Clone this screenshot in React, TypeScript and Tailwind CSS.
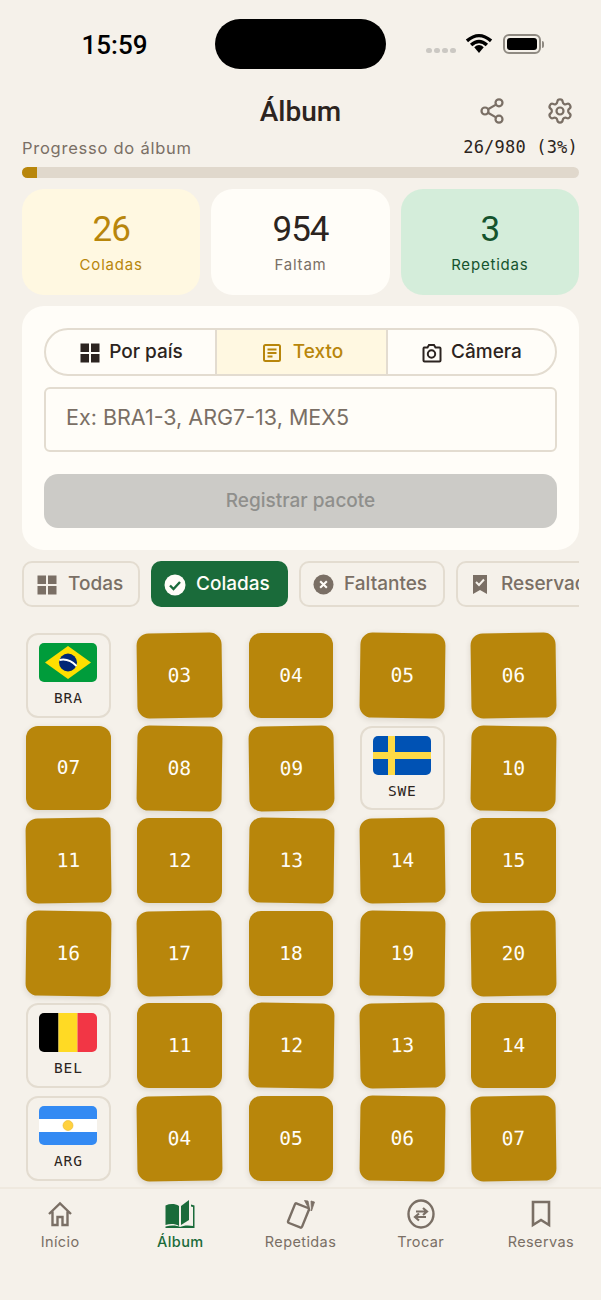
import { LucideIcon, Settings, Share2 } from "lucide-react";

type Cell = { flag?: "BRA" | "SWE" | "BEL" | "ARG"; n?: string; r?: number };

const CELLS: Cell[] = [
  { flag: "BRA" },
  { n: "03", r: -0.8 },
  { n: "04", r: 0 },
  { n: "05", r: 0.8 },
  { n: "06", r: -0.8 },
  { n: "07", r: 0 },
  { n: "08", r: 0.8 },
  { n: "09", r: -0.8 },
  { flag: "SWE" },
  { n: "10", r: 0.8 },
  { n: "11", r: -0.8 },
  { n: "12", r: 0 },
  { n: "13", r: 0.8 },
  { n: "14", r: -0.8 },
  { n: "15", r: 0 },
  { n: "16", r: 0.8 },
  { n: "17", r: -0.8 },
  { n: "18", r: 0 },
  { n: "19", r: 0.8 },
  { n: "20", r: -0.8 },
  { flag: "BEL" },
  { n: "11", r: 0 },
  { n: "12", r: 0.8 },
  { n: "13", r: -0.8 },
  { n: "14", r: 0 },
  { flag: "ARG" },
  { n: "04", r: -0.8 },
  { n: "05", r: 0 },
  { n: "06", r: 0.8 },
  { n: "07", r: -0.8 },
];

function Flag({ code }: { code: NonNullable<Cell["flag"]> }) {
  return (
    <svg width="58" height="39" viewBox="0 0 58 39" className="rounded-[5px]">
      {code === "BRA" && (
        <>
          <rect width="58" height="39" fill="#009C3B" />
          <polygon points="29,3 52,19.5 29,36 6,19.5" fill="#FFDF00" />
          <circle cx="29" cy="19.5" r="9" fill="#002776" />
          <path d="M20.5 17 Q30 15 37.5 23" stroke="#fff" strokeWidth="2" fill="none" />
        </>
      )}
      {code === "SWE" && (
        <>
          <rect width="58" height="39" fill="#0052B4" />
          <rect x="15" width="7" height="39" fill="#FFDA44" />
          <rect y="16" width="58" height="7" fill="#FFDA44" />
        </>
      )}
      {code === "BEL" && (
        <>
          <rect width="19.5" height="39" fill="#000" />
          <rect x="19.5" width="19" height="39" fill="#FFDA24" />
          <rect x="38.5" width="19.5" height="39" fill="#F23645" />
        </>
      )}
      {code === "ARG" && (
        <>
          <rect width="58" height="39" fill="#338AF3" />
          <rect y="13" width="58" height="13" fill="#fff" />
          <circle cx="29" cy="19.5" r="5" fill="#FFD13F" stroke="#E8B830" strokeWidth="0.6" />
        </>
      )}
    </svg>
  );
}

function GridIcon({ color, size = 20 }: { color: string; size?: number }) {
  return (
    <svg width={size} height={size} viewBox="0 0 20 20" fill={color}>
      <rect x="0.5" y="0.5" width="8.5" height="8.5" />
      <rect x="11" y="0.5" width="8.5" height="8.5" />
      <rect x="0.5" y="11" width="8.5" height="8.5" />
      <rect x="11" y="11" width="8.5" height="8.5" />
    </svg>
  );
}

function IconBtn({ Icon }: { Icon: LucideIcon }) {
  return <Icon size={28} strokeWidth={1.9} color="#7A6F65" />;
}

function Stat({ value, label, bg, color, labelColor }: { value: string; label: string; bg: string; color: string; labelColor: string }) {
  return (
    <div className={`flex-1 h-[106px] rounded-[22px] flex flex-col items-center ${bg}`}>
      <div className={`mt-[21px] h-[40px] leading-[40px] text-[35px] tracking-[-1px] font-['Roboto',sans-serif] ${color}`}>{value}</div>
      <div className={`mt-[4px] text-[15px] tracking-[0.8px] ${labelColor}`}>{label}</div>
    </div>
  );
}

function Sticker({ cell }: { cell: Cell }) {
  if (cell.flag) {
    return (
      <div className="aspect-square rounded-[12px] border-2 border-[#E3DCD0] bg-[#F5F1EA] flex flex-col items-center pt-[8px]">
        <Flag code={cell.flag} />
        <div className="mt-[7px] text-[14.5px] leading-[18px] tracking-[0.8px] text-[#2C2420] font-['DejaVu_Sans_Mono',monospace]">{cell.flag}</div>
      </div>
    );
  }
  return (
    <div
      className="aspect-square rounded-[12px] bg-[#B8860B] shadow-[0_2px_6px_rgba(60,40,10,0.14)] flex items-center justify-center text-[19.5px] text-[#FFFDF8] font-['DejaVu_Sans_Mono',monospace]"
      style={{ transform: `rotate(${cell.r}deg)` }}
    >
      {cell.n}
    </div>
  );
}

const NAV_COLOR = "#7A6F65";

function NavItem({ label, active, children }: { label: string; active?: boolean; children: React.ReactNode }) {
  return (
    <div className="flex-1 flex flex-col items-center">
      <div className="h-[32px] flex items-center justify-center">{children}</div>
      <div className={`mt-[3px] text-[14.5px] leading-[18px] tracking-[0.4px] ${active ? "text-[#1A6B3A] font-medium" : "text-[#7A6F65]"}`}>{label}</div>
    </div>
  );
}

export default function App() {
  return (
    <div className="w-[601px] h-[1300px] overflow-hidden bg-[#F5F1EA] flex flex-col font-['Inter',sans-serif] text-[#2C2420]">
      {/* Status bar */}
      <div className="h-[88px] shrink-0 flex pt-[19px]">
        <div className="w-[215px] h-[50px] flex items-center justify-center pl-[14px] pt-[2px] text-[26px] font-medium text-black font-['Roboto',sans-serif]">15:59</div>
        <div className="w-[171px] h-[50px] rounded-[25px] bg-black" />
        <div className="flex-1 h-[50px] flex items-center pl-[40px]">
          <div className="flex gap-[2.5px] mt-[13px]">
            {[0, 1, 2, 3].map((i) => (
              <div key={i} className="w-[5.5px] h-[5.5px] rounded-full bg-[#CBC8C3]" />
            ))}
          </div>
          <svg width="28" height="21" viewBox="0 0 26 20" className="ml-[9px] mt-[-1px]">
            <path d="M1.5 7.5 Q13 -2.5 24.5 7.5 M5.5 11.5 Q13 4.5 20.5 11.5" stroke="#000" strokeWidth="3.2" fill="none" />
            <path d="M8.5 13.5 Q13 9.5 17.5 13.5 L13 19 Z" fill="#000" />
          </svg>
          <div className="ml-[10px] w-[38px] h-[20px] rounded-[6px] border-2 border-[#8F8A82] p-[2px] mt-[-1px] flex">
            <div className="flex-1 rounded-[3px] bg-black" />
          </div>
          <div className="w-[2px] h-[7px] bg-[#8F8A82] rounded-r-sm ml-[1px]" />
        </div>
      </div>

      {/* Header */}
      <div className="h-[47px] shrink-0 relative flex items-center justify-center">
        <div className="text-[28px] font-medium font-['Roboto',sans-serif]">Álbum</div>
        <div className="absolute right-[27px] top-[9px] flex gap-[40px]">
          <IconBtn Icon={Share2} />
          <IconBtn Icon={Settings} />
        </div>
      </div>

      {/* Progress */}
      <div className="px-[22px] shrink-0">
        <div className="h-[26px] flex items-center justify-between">
          <span className="text-[16.5px] tracking-[0.75px] text-[#7A6F65]">Progresso do álbum</span>
          <span className="text-[17px] tracking-[0.2px] mr-[1px] text-[#2C2420] font-['DejaVu_Sans_Mono',monospace]">26/980 (3%)</span>
        </div>
        <div className="mt-[6px] h-[11px] rounded-full bg-[#E0D8CC] overflow-hidden">
          <div className="h-full w-[15px] bg-[#B8860B]" />
        </div>

        <div className="mt-[11px] flex gap-[11px]">
          <Stat value="26" label="Coladas" bg="bg-[#FFF8E1]" color="text-[#B8860B]" labelColor="text-[#B8860B]" />
          <Stat value="954" label="Faltam" bg="bg-[#FFFDF8]" color="text-[#2C2420]" labelColor="text-[#7A6F65]" />
          <Stat value="3" label="Repetidas" bg="bg-[#D4EDDA]" color="text-[#14532D]" labelColor="text-[#14532D]" />
        </div>

        {/* Register card */}
        <div className="mt-[11px] h-[244px] rounded-[22px] bg-[#FFFDF8] p-[22px]">
          <div className="h-[48px] rounded-[24px] border-2 border-[#E3DCD0] flex overflow-hidden text-[19px] font-medium">
            <div className="flex-1 flex items-center justify-center gap-[9px] pt-[1px] pl-[2px]">
              <GridIcon color="#2C2420" />
              Por país
            </div>
            <div className="flex-1 flex items-center justify-center gap-[11px] pt-[1px] pl-[2px] bg-[#FFF8E1] border-x-2 border-[#E3DCD0] text-[#B8860B]">
              <svg width="20" height="20" viewBox="0 0 20 20" fill="none" stroke="#B8860B" strokeWidth="2">
                <rect x="2" y="2" width="16" height="16" rx="1.5" />
                <path d="M5.5 6.5h9M5.5 10h9M5.5 13.5h5" />
              </svg>
              Texto
            </div>
            <div className="flex-1 flex items-center justify-center gap-[9px] pt-[1px]">
              <svg width="21" height="20" viewBox="0 0 21 20" fill="none" stroke="#2C2420" strokeWidth="2">
                <path d="M2.5 4.5h4l1.5-2.5h5l1.5 2.5h4a1 1 0 0 1 1 1v12a1 1 0 0 1-1 1h-15a1 1 0 0 1-1-1v-12a1 1 0 0 1 1-1z" />
                <circle cx="10.5" cy="11" r="3.7" />
              </svg>
              Câmera
            </div>
          </div>

          <div className="mt-[11px] h-[65px] rounded-[6px] border-2 border-[#E3DCD0] flex items-center pl-[20px] pb-[4px] text-[21.5px] text-[#7A6F65]">
            Ex: BRA1-3, ARG7-13, MEX5
          </div>

          <div className="mt-[22px] h-[54px] rounded-[14px] bg-[#CCCBC7] flex items-center justify-center pt-[1px] text-[19px] font-medium text-[#8F8F8C]">
            Registrar pacote
          </div>
        </div>

        {/* Filters */}
        <div className="mt-[11px] h-[46px] flex gap-[11px] overflow-hidden text-[19px] font-medium text-[#7A6F65]">
          <div className="shrink-0 w-[118px] rounded-[10px] border-2 border-[#E3DCD0] flex items-center gap-[11px] pl-[13px] pt-[1px]">
            <GridIcon color="#7A6F65" />
            Todas
          </div>
          <div className="shrink-0 w-[137px] rounded-[10px] bg-[#1A6B3A] text-[#FFFDF8] flex items-center gap-[10px] pl-[13px] pt-[1px]">
            <svg width="22" height="22" viewBox="0 0 22 22">
              <circle cx="11" cy="11" r="10.5" fill="#FFFDF8" />
              <path d="M6 11.5l3.5 3.5L16 8" stroke="#1A6B3A" strokeWidth="2.4" fill="none" />
            </svg>
            Coladas
          </div>
          <div className="shrink-0 w-[146px] rounded-[10px] border-2 border-[#E3DCD0] flex items-center gap-[10px] pl-[12px] pt-[1px]">
            <svg width="21" height="21" viewBox="0 0 22 22">
              <circle cx="11" cy="11" r="10.5" fill="#7A6F65" />
              <path d="M7.5 7.5l7 7M14.5 7.5l-7 7" stroke="#FFFDF8" strokeWidth="2.2" />
            </svg>
            Faltantes
          </div>
          <div className="shrink-0 w-[160px] rounded-[10px] border-2 border-[#E3DCD0] flex items-center gap-[13px] pl-[14px] pt-[1px]">
            <svg width="16" height="21" viewBox="0 0 16 21">
              <path d="M1 1h14v19l-7-4-7 4z" fill="#7A6F65" />
              <path d="M4 8l3 3 5-5.5" stroke="#F5F1EA" strokeWidth="2" fill="none" />
            </svg>
            Reservadas
          </div>
        </div>
      </div>

      {/* Stickers */}
      <div className="flex-1 min-h-0 overflow-hidden pl-[26px] pr-[45px] pt-[26px]">
        <div className="grid grid-cols-5 gap-x-[26.5px] gap-y-[7.8px]">
          {CELLS.map((c, i) => (
            <Sticker key={i} cell={c} />
          ))}
        </div>
      </div>

      {/* Bottom nav */}
      <div className="h-[113px] shrink-0 border-t-2 border-[#EFE9DF] bg-[#F5F1EA] flex pt-[9px]">
        <NavItem label="Início">
          <svg width="26" height="26" viewBox="0 0 26 26" fill="none" stroke={NAV_COLOR} strokeWidth="2.4">
            <path d="M2 13L13 2.5 24 13M5.5 10.5V24H10.5V16H15.5V24H20.5V10.5" />
          </svg>
        </NavItem>
        <NavItem label="Álbum" active>
          <svg width="30" height="29" viewBox="0 0 30 29" fill="#1A6B3A">
            <path d="M0.5 5.5C5 3.5 10 3.5 14 6V26C10 23.5 5 23.5 0.5 25z" />
            <path d="M16 6L24 0V20L16 25z" />
            <path d="M26 4.5L29.5 5.5V28H0.5V26.5C7 25 12 25.5 15 27C18 25.5 23 25 28 26V7L26 6.5z" />
          </svg>
        </NavItem>
        <NavItem label="Repetidas">
          <svg width="30" height="30" viewBox="0 0 30 30" fill="none" stroke={NAV_COLOR} strokeWidth="2.4" strokeLinejoin="round">
            <rect x="5" y="6" width="15" height="21" rx="1.5" transform="rotate(22 12.5 16.5)" />
            <path d="M18.5 1.5L22 2 24 12z" fill={NAV_COLOR} strokeWidth="0.8" />
            <path d="M25 2L28.5 3 25.5 12z" fill={NAV_COLOR} strokeWidth="0.8" />
          </svg>
        </NavItem>
        <NavItem label="Trocar">
          <svg width="28" height="30" viewBox="0 0 28 30" fill="none" stroke={NAV_COLOR} strokeWidth="2.4">
            <ellipse cx="14" cy="15" rx="12.5" ry="13.5" />
            <path d="M9 12.5H19M16 9l4 3.5-4 3.5" strokeWidth="2.2" />
            <path d="M19 18H8M12 14.5L8 18l4 3.5" strokeWidth="2.2" />
          </svg>
        </NavItem>
        <NavItem label="Reservas">
          <svg width="20" height="28" viewBox="0 0 20 28" fill="none" stroke={NAV_COLOR} strokeWidth="2.6">
            <path d="M2 2H18V25L10 20 2 25z" />
          </svg>
        </NavItem>
      </div>
    </div>
  );
}
